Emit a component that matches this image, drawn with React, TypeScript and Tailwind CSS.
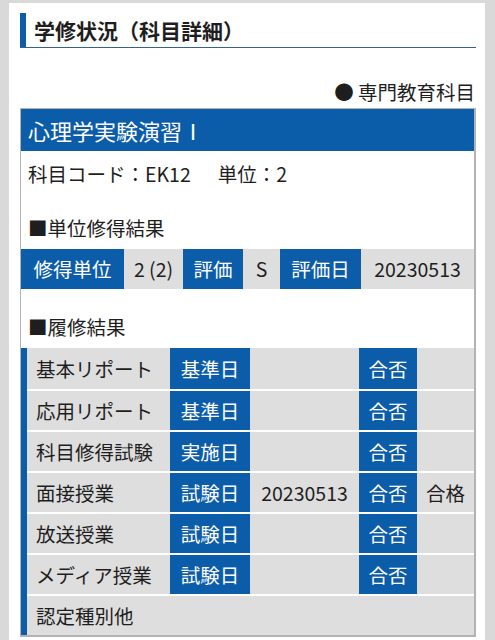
const blue = 'bg-[#0b5ca9] text-white';
const gray = 'bg-[#dedede] text-[#1e1e1e]';

type Row = { label: string; dateLabel?: string; date?: string; result?: string };

const rows: Row[] = [
  { label: '基本リポート', dateLabel: '基準日' },
  { label: '応用リポート', dateLabel: '基準日' },
  { label: '科目修得試験', dateLabel: '実施日' },
  { label: '面接授業', dateLabel: '試験日', date: '20230513', result: '合格' },
  { label: '放送授業', dateLabel: '試験日' },
  { label: 'メディア授業', dateLabel: '試験日' },
  { label: '認定種別他' },
];

function HistoryRow({ row, first }: { row: Row; first: boolean }) {
  return (
    <div className={`flex h-[41px] ${first ? '' : 'border-t-2 border-white'}`}>
      <div className={`${gray} w-[143px] flex items-center pl-[9px]`}>{row.label}</div>
      {row.dateLabel ? (
        <>
          <div className={`${blue} w-[80px] flex items-center justify-center`}>{row.dateLabel}</div>
          <div className={`${gray} w-[109px] flex items-center justify-center`}>{row.date}</div>
          <div className={`${blue} w-[58px] flex items-center justify-center`}>合否</div>
          <div className={`${gray} flex-1 flex items-center justify-center`}>{row.result}</div>
        </>
      ) : (
        <div className={`${gray} flex-1`} />
      )}
    </div>
  );
}

export default function App() {
  return (
    <div
      className="h-[640px] w-[495px] overflow-hidden bg-[#d9d9d9] pt-[3px] pl-[9px] pr-[10px] text-[#1e1e1e]"
      style={{ fontFamily: '"Noto Sans CJK JP", "Noto Sans", sans-serif' }}
    >
      <div className="h-full bg-white pt-[10px] pl-[11px] pr-[9px]">
        <div className="flex h-[35px] border-b border-[#34628f]">
          <div className="w-[6px] bg-[#0b5ca9]" />
          <div className="ml-[8px] flex items-center text-[21px] font-bold leading-none">学修状況（科目詳細）</div>
        </div>

        <div className="mt-[30px] h-[28px] flex items-center justify-end text-[19.5px] leading-none pr-[1px]">
          ● 専門教育科目
        </div>

        <div className="mt-[2px] border border-[#b3b3b3] border-r-2 border-b-2 text-[19.5px] leading-none">
          <div className={`${blue} h-[42px] flex items-center px-[7px] text-[22px]`}>心理学実験演習Ⅰ</div>

          <div className="h-[46px] flex items-center px-[7px]">
            科目コード：EK12<span className="ml-[27px]">単位：2</span>
          </div>

          <div className="mt-[15px] h-[32px] flex items-center px-[7px]">■単位修得結果</div>

          <div className="mt-[5px] flex h-[40px]">
            <div className={`${blue} w-[103px] flex items-center justify-center`}>修得単位</div>
            <div className={`${gray} w-[59px] flex items-center justify-center`}>2 (2)</div>
            <div className={`${blue} w-[60px] flex items-center justify-center`}>評価</div>
            <div className={`${gray} w-[37px] flex items-center justify-center`}>S</div>
            <div className={`${blue} w-[81px] flex items-center justify-center`}>評価日</div>
            <div className={`${gray} flex-1 flex items-center justify-center`}>20230513</div>
          </div>

          <div className="mt-[22px] h-[32px] flex items-center px-[7px]">■履修結果</div>

          <div className="mt-[5px] border-l-[6px] border-[#0b5ca9]">
            {rows.map((r, i) => (
              <HistoryRow key={r.label} row={r} first={i === 0} />
            ))}
          </div>
        </div>
      </div>
    </div>
  );
}
